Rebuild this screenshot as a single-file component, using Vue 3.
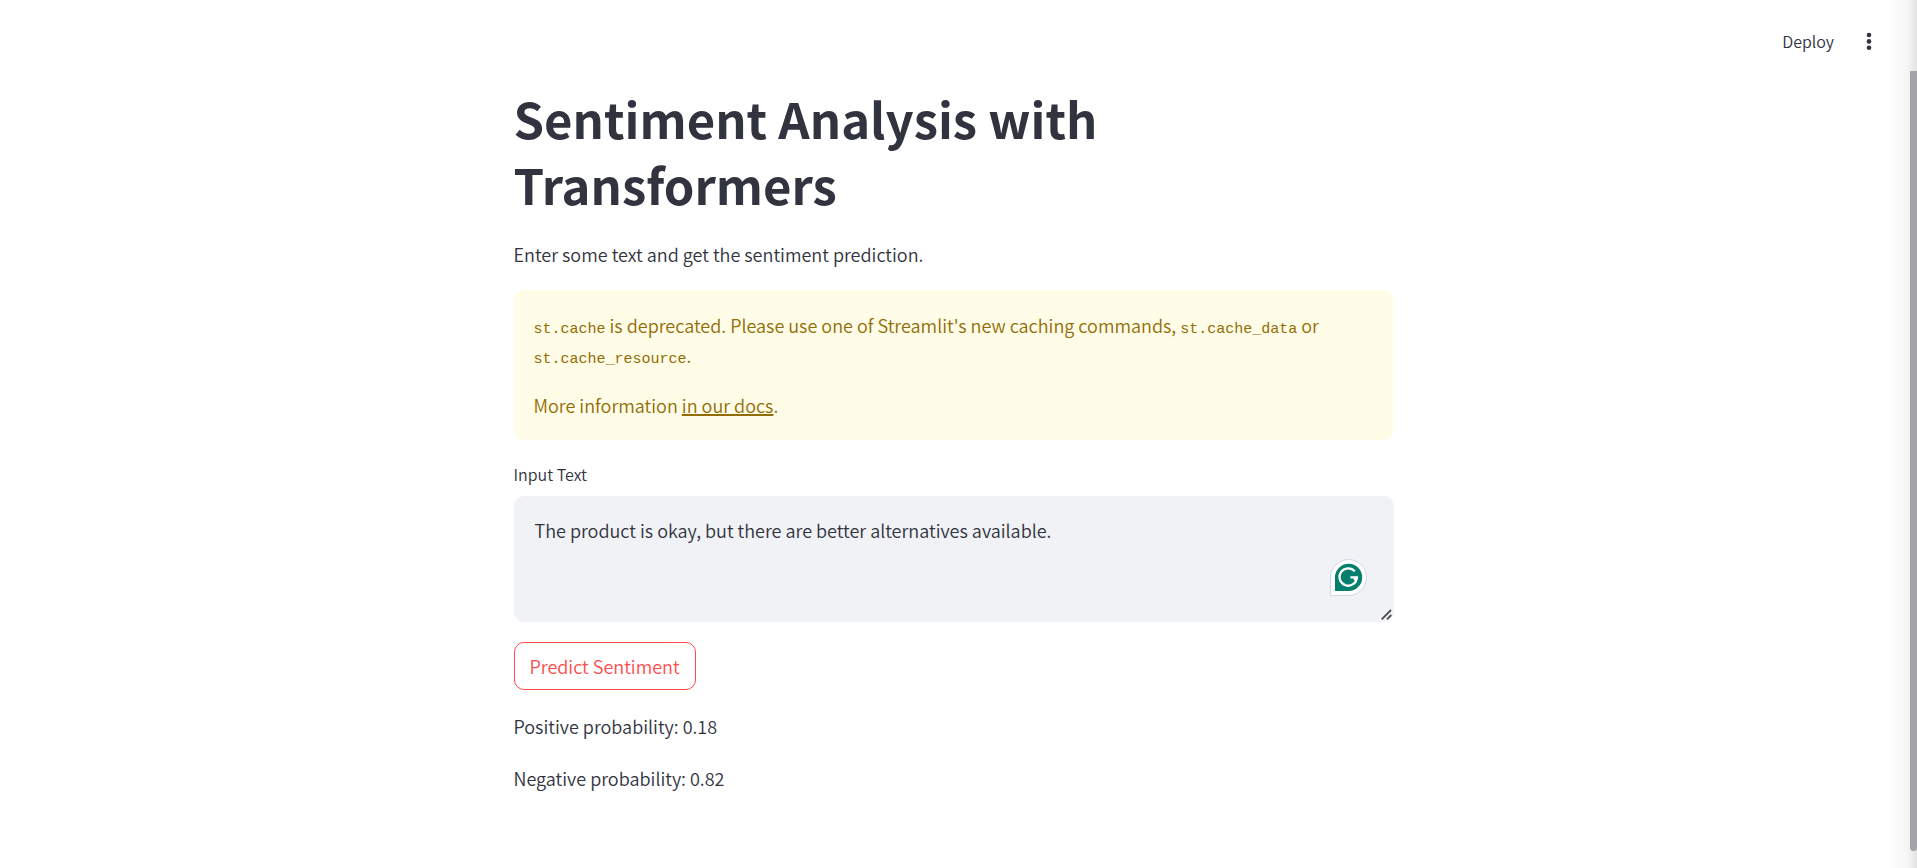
<script setup>
import { ref } from 'vue'

const text = ref('The product is okay, but there are better alternatives available.')
const results = ref([
  { label: 'Positive probability', value: '0.18' },
  { label: 'Negative probability', value: '0.82' },
])
</script>

<template>
  <div class="app">
    <header class="toolbar">
      <button type="button" class="deploy">Deploy</button>
      <button type="button" class="menu" aria-label="Main menu">
        <svg width="20" height="20" viewBox="0 0 20 20" fill="currentColor" aria-hidden="true">
          <circle cx="10" cy="4" r="2.3" />
          <circle cx="10" cy="10.4" r="2.3" />
          <circle cx="10" cy="16.8" r="2.3" />
        </svg>
      </button>
    </header>

    <main class="content">
      <h1>Sentiment Analysis with Transformers</h1>
      <p class="para">Enter some text and get the sentiment prediction.</p>

      <div class="alert" role="alert">
        <p><code>st.cache</code> is deprecated. Please use one of Streamlit's new caching commands, <code>st.cache_data</code> or <code>st.cache_resource</code>.</p>
        <p>More information <a href="#docs">in our docs</a>.</p>
      </div>

      <div class="field">
        <label for="input-text">Input Text</label>
        <div class="area">
          <textarea id="input-text" v-model="text" spellcheck="false"></textarea>
          <button type="button" class="assistant" aria-label="Writing assistant">
            <svg width="37" height="37" viewBox="0 0 37 37" aria-hidden="true">
              <path d="M.5 36.5V18.5a18 18 0 1 1 18 18z" fill="#fff" stroke="#d3d5e2" />
              <path d="M5 32V18.3A13.6 13.6 0 1 1 18.6 32z" fill="#047e6d" />
              <path d="M24.8 12.3A8.7 8.7 0 1 0 26.9 18.4H20.4M26.9 18.4L24.2 21.2" fill="none" stroke="#fff" stroke-width="2.3" />
            </svg>
          </button>
          <svg class="grip" width="11" height="11" viewBox="0 0 11 11" aria-hidden="true">
            <path d="M.7 10.3L10 1M6 10.3L10.3 6" fill="none" stroke="#4c4c4c" stroke-width="1.8" />
          </svg>
        </div>
      </div>

      <button type="button" class="predict">Predict Sentiment</button>

      <p v-for="r in results" :key="r.label" class="para">{{ r.label }}: {{ r.value }}</p>
    </main>

    <div class="edge" aria-hidden="true"><div class="thumb"></div></div>
  </div>
</template>

<style>
body {
  background: #fff;
}
</style>

<style scoped>
.app {
  position: relative;
  box-sizing: border-box;
  min-height: 100vh;
  padding-right: 10px;
  color: #31333f;
  font-family: "Noto Sans CJK SC", "Noto Sans", sans-serif;
  font-size: 18px;
  font-weight: 350;
  line-height: 32px;
}
button {
  padding: 0;
  border: 0;
  background: none;
  color: inherit;
  font: inherit;
  cursor: pointer;
}
.toolbar {
  display: flex;
  align-items: center;
  justify-content: flex-end;
  gap: 24px;
  height: 82px;
  padding-right: 27px;
}
.deploy {
  font-size: 16px;
}
.menu {
  display: flex;
  width: 22px;
  justify-content: center;
}
.content {
  display: flex;
  flex-direction: column;
  align-items: stretch;
  gap: 20px;
  max-width: 880px;
  margin: 0 auto;
  padding-top: 3px;
}
h1 {
  margin: 0;
  padding-bottom: 1px;
  font-size: 49px;
  font-weight: 700;
  line-height: 66px;
}
.para {
  margin: 0;
}
.alert {
  display: flex;
  flex-direction: column;
  gap: 20px;
  padding: 20px;
  border-radius: 10px;
  background: #fffce7;
  color: #926c05;
  line-height: 30px;
}
.alert p {
  margin: 0;
}
.alert a {
  color: inherit;
  text-decoration: underline;
  text-decoration-thickness: 2px;
}
code {
  font-family: "Liberation Mono", monospace;
  font-size: 15px;
  line-height: 1;
}
.field label {
  display: block;
  margin-bottom: 8px;
  font-size: 16px;
  line-height: 28px;
}
.area {
  position: relative;
}
textarea {
  display: block;
  box-sizing: border-box;
  width: 100%;
  height: 126px;
  padding: 18px 21px;
  border: 0;
  border-radius: 10px;
  background: #f0f2f6;
  color: inherit;
  font: inherit;
  resize: none;
  outline: none;
}
.assistant {
  position: absolute;
  right: 27px;
  bottom: 26px;
  display: flex;
}
.grip {
  position: absolute;
  right: 2px;
  bottom: 2px;
}
.predict {
  align-self: flex-start;
  height: 48px;
  padding: 0 15px;
  border: 1px solid #ff4b4b;
  border-radius: 10px;
  color: #ff4b4b;
}
.edge {
  position: absolute;
  inset: 0 0 0 auto;
  width: 30px;
  background: linear-gradient(to right, #0000, #0000000a 70%, #0000001c);
}
.thumb {
  width: 7px;
  height: calc(90% - 1px);
  margin: 71px 0 0 auto;
  border-radius: 0 0 4px 4px;
  background: #a3a3a8;
}
</style>
